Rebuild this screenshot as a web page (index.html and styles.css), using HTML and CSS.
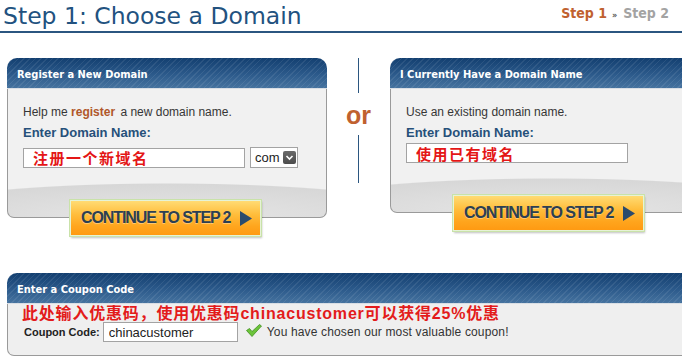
FILE: index.html
```html
<!DOCTYPE html>
<html>
<head>
<meta charset="utf-8">
<title>Step 1: Choose a Domain</title>
<link rel="stylesheet" href="styles.css">
</head>
<body>
<div class="page">
  <header class="title-bar">
    <h1 class="title">Step 1: Choose a Domain</h1>
    <div class="steps"><span class="step current">Step 1</span><span class="sep">»</span><span class="step">Step 2</span></div>
  </header>

  <section class="domains">
    <div class="col">
      <div class="panel">
        <div class="panel-head">Register a New Domain</div>
        <div class="panel-body body-new">
          <p class="lead">Help me <strong class="hl">register</strong> a new domain name.</p>
          <div class="label">Enter Domain Name:</div>
          <div class="field-row row-new">
            <input class="text-input cn" type="text" value="注册一个新域名">
            <div class="select"><span class="select-val">com</span><span class="select-arrow"><svg width="13" height="13" viewBox="0 0 13 13"><path d="M3.5 5 L6.5 8 L9.5 5" fill="none" stroke="#fff" stroke-width="1.6"/></svg></span></div>
          </div>
        </div>
      </div>
      <a class="btn" href="#">CONTINUE TO STEP 2<svg class="tri" width="12" height="15" viewBox="0 0 12 15"><path d="M0 0 L12 7.5 L0 15 Z" fill="#2b4b6d"/></svg></a>
    </div>

    <div class="or-col">
      <span class="vline vline-top"></span>
      <span class="or">or</span>
      <span class="vline vline-bottom"></span>
    </div>

    <div class="col">
      <div class="panel">
        <div class="panel-head">I Currently Have a Domain Name</div>
        <div class="panel-body body-existing">
          <p class="lead">Use an existing domain name.</p>
          <div class="label">Enter Domain Name:</div>
          <div class="field-row row-existing">
            <input class="text-input cn" type="text" value="使用已有域名">
          </div>
        </div>
      </div>
      <a class="btn" href="#">CONTINUE TO STEP 2<svg class="tri" width="12" height="15" viewBox="0 0 12 15"><path d="M0 0 L12 7.5 L0 15 Z" fill="#2b4b6d"/></svg></a>
    </div>
  </section>

  <section class="coupon">
    <div class="panel-head">Enter a Coupon Code</div>
    <div class="coupon-body">
      <p class="promo">此处输入优惠码，使用优惠码chinacustomer可以获得25%优惠</p>
      <div class="coupon-row">
        <span class="coupon-label">Coupon Code:</span>
        <input class="coupon-input" type="text" value="chinacustomer">
        <svg class="check" width="16" height="13" viewBox="0 0 16 13"><path d="M0.5 6.5 L3.5 4.5 L6 7.5 L13.5 0.5 L15.5 2 L6 12.5 Z" fill="#6cc43a" stroke="#3f8f1e" stroke-width="0.8" stroke-linejoin="round"/></svg>
        <span class="coupon-msg">You have chosen our most valuable coupon!</span>
      </div>
    </div>
  </section>
</div>
</body>
</html>
```

FILE: styles.css
```css
html, body {
  margin: 0;
  padding: 0;
  background: #fff;
}

body {
  font-family: "Liberation Sans", Arial, sans-serif;
  color: #333;
}

.page {
  width: 682px;
  height: 357px;
  overflow: hidden;
}

/* ---------- title ---------- */
.title-bar {
  display: flex;
  justify-content: space-between;
  align-items: flex-end;
  height: 31px;
  padding: 0 13px 0 3px;
  border-bottom: 2px solid #2b5680;
}

.title {
  margin: 0;
  font-family: "DejaVu Sans", sans-serif;
  font-weight: normal;
  font-size: 23.5px;
  line-height: 30px;
  color: #22527f;
}

.steps {
  align-self: flex-start;
  margin-top: 5px;
  display: flex;
  align-items: baseline;
  font-family: "DejaVu Sans Condensed", "DejaVu Sans", sans-serif;
  font-stretch: condensed;
  font-weight: bold;
  font-size: 14px;
  line-height: 16px;
  color: #a3a3a3;
}

.step.current {
  color: #c0612f;
}

.sep {
  font-size: 9px;
  margin: 0 6px 0 5px;
  color: #555;
}

/* ---------- domain panels ---------- */
.domains {
  display: flex;
  margin-top: 25px;
  padding-left: 7px;
}

.col {
  width: 320px;
  flex-shrink: 0;
  display: flex;
  flex-direction: column;
}

.panel-head {
  height: 31px;
  box-sizing: border-box;
  padding: 0 10px;
  line-height: 34px;
  border-radius: 10px 10px 0 0;
  border-bottom: 1px solid #d9dee4;
  background:
    repeating-linear-gradient(135deg, rgba(255,255,255,0.08) 0 1px, rgba(255,255,255,0) 1px 4px),
    linear-gradient(#133f70, #2c5a8b 55%, #46739f);
  color: #fff;
  font-family: "DejaVu Sans Condensed", "DejaVu Sans", sans-serif;
  font-stretch: condensed;
  font-weight: bold;
  font-size: 11px;
  white-space: nowrap;
}

.panel-body {
  box-sizing: border-box;
  border: 1px solid #9a9a9a;
  border-top: 0;
  border-radius: 0 0 7px 7px;
  padding: 16px 15px 0;
  background:
    radial-gradient(282px 34px at 50% 100%, #e6e6e6 0%, #d7d7d7 97%, #f1f1f1 100%),
    #efefef;
}

.body-new { height: 129px; }
.body-existing { height: 124px; }

.lead {
  margin: 0;
  font-size: 12px;
  line-height: 15px;
  color: #363636;
}

.hl {
  color: #b0572b;
  margin-right: 2px;
}

.label {
  margin-top: 5px;
  font-size: 13px;
  font-weight: bold;
  line-height: 16px;
  color: #26507a;
}

.field-row {
  display: flex;
  align-items: center;
}

.row-new { margin-top: 6px; }
.row-existing { margin-top: 2px; }

.text-input {
  box-sizing: border-box;
  width: 222px;
  height: 20px;
  margin: 0;
  padding: 0 0 0 9px;
  border: 1px solid #a3a3a3;
  background: #fff;
  outline: none;
}

.cn {
  font-family: "Noto Sans CJK SC", sans-serif;
  font-weight: bold;
  font-size: 15px;
  letter-spacing: 1.5px;
  color: #e41616;
}

.select {
  box-sizing: border-box;
  width: 48px;
  height: 21px;
  margin-left: 5px;
  border: 1px solid #a3a3a3;
  background: #fff;
  display: flex;
  align-items: center;
  justify-content: space-between;
  padding: 0 1px 0 4px;
  font-size: 13px;
  color: #222;
}

.select-arrow {
  width: 13px;
  height: 13px;
  border-radius: 2px;
  background: linear-gradient(#6a6a6a, #4c4c4c);
  display: flex;
}

/* ---------- continue buttons ---------- */
.btn {
  position: relative;
  z-index: 1;
  box-sizing: border-box;
  width: 191px;
  height: 36px;
  margin: -18px 0 0 63px;
  padding-left: 10px;
  display: flex;
  align-items: center;
  border: 1px solid #e6f3d6;
  box-shadow: 0 0 0 1px #c9e2a9, 1px 2px 2px rgba(0,0,0,0.25);
  background: linear-gradient(#ffdb73, #ffbd3b 40%, #ffa51d 75%, #ff9a12);
  color: #2c3f53;
  font-family: "Liberation Sans", Arial, sans-serif;
  font-weight: bold;
  font-size: 16px;
  letter-spacing: -1.1px;
  text-decoration: none;
  text-shadow: 0 1px 0 rgba(255,255,255,0.35);
  white-space: nowrap;
}

.tri {
  margin-left: 10px;
  flex-shrink: 0;
}

/* ---------- or divider ---------- */
.or-col {
  width: 63px;
  flex-shrink: 0;
  display: flex;
  flex-direction: column;
  align-items: center;
}

.vline {
  display: block;
  width: 1px;
  background: #2b5680;
}

.vline-top { height: 35px; }
.vline-bottom { height: 48px; }

.or {
  margin: 7px 0 5px;
  font-size: 25px;
  line-height: 30px;
  font-weight: bold;
  color: #c0612f;
}

/* ---------- coupon ---------- */
.coupon {
  width: 700px;
  margin: 37px 0 0 7px;
}

.coupon .panel-head {
  border-radius: 10px 0 0 0;
}

.coupon-body {
  box-sizing: border-box;
  height: 52px;
  border: 1px solid #9a9a9a;
  border-top: 0;
  border-radius: 0 0 0 7px;
  background: #efefef;
  padding: 1px 0 0 14px;
}

.promo {
  margin: 0;
  font-family: "Liberation Sans", "Noto Sans CJK SC", sans-serif;
  font-weight: bold;
  font-size: 16px;
  line-height: 18px;
  letter-spacing: 0.8px;
  color: #e31b1b;
}

.coupon-row {
  display: flex;
  align-items: center;
  margin-top: -1px;
  padding-left: 2px;
}

.coupon-label {
  font-size: 11px;
  font-weight: bold;
  color: #222;
}

.coupon-input {
  box-sizing: border-box;
  width: 135px;
  height: 20px;
  margin: 0 0 0 3px;
  padding: 0 5px;
  border: 1px solid #a3a3a3;
  background: #fff;
  font-family: "Liberation Sans", Arial, sans-serif;
  font-size: 13px;
  color: #222;
  outline: none;
}

.check {
  margin-left: 8px;
  margin-top: -4px;
  flex-shrink: 0;
}

.coupon-msg {
  margin-left: 5px;
  font-size: 12px;
  letter-spacing: 0.15px;
  color: #333;
}
```
